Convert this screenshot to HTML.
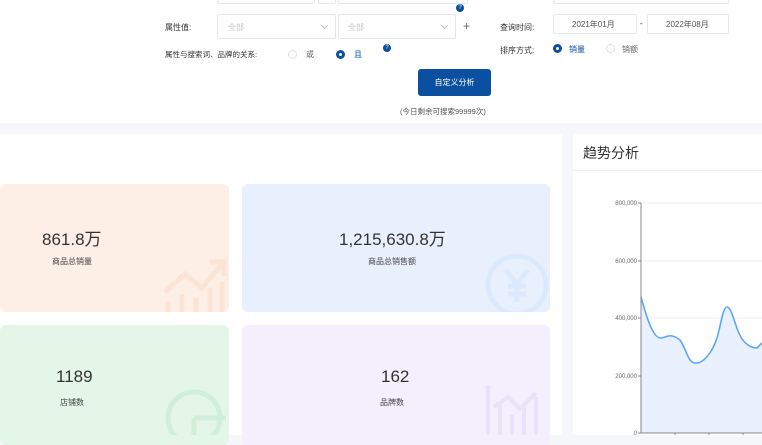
<!DOCTYPE html>
<html><head><meta charset="utf-8"><style>
*{margin:0;padding:0;box-sizing:border-box}
body{width:762px;height:435px;overflow:hidden;background:#f5f7fa;font-family:"Liberation Sans","Noto Sans CJK SC",sans-serif;position:relative;color:#333}
.a{position:absolute}
.box{position:absolute;border:1px solid #e4e7ed;background:#fff;border-radius:2px}
.t{position:absolute;font-size:8px;color:#333;white-space:nowrap}
.ph{color:#c0c4cc}
.rad{position:absolute;width:9px;height:9px;border-radius:50%;border:1px solid #dcdfe6;background:#fff}
.rad.on{border:3px solid #0a4fa0}
.q{position:absolute;width:8px;height:8px;border-radius:50%;background:#0a4fa0;color:#fff;font-size:6px;text-align:center;line-height:8px}
.chev{position:absolute;width:5px;height:5px;border-right:1px solid #c0c4cc;border-bottom:1px solid #c0c4cc;transform:rotate(45deg)}
.card{position:absolute;border-radius:6px;text-align:center}
.num{position:absolute;font-size:17px;color:#333;white-space:nowrap}
.lbl{position:absolute;font-size:8px;color:#444;white-space:nowrap}
</style></head><body>
<div class="a" style="left:0;top:0;width:762px;height:123px;background:#fff"></div>
<div class="box" style="left:217px;top:-10px;width:98px;height:14px"></div>
<div class="box" style="left:318px;top:-10px;width:18px;height:14px"></div>
<div class="box" style="left:338px;top:-10px;width:130px;height:14px"></div>
<div class="box" style="left:553px;top:-10px;width:176px;height:14px"></div>
<div class="q" style="left:456px;top:4px">?</div>
<div class="t" style="left:165px;top:22px">属性值:</div>
<div class="box" style="left:217px;top:14px;width:119px;height:25px"></div>
<div class="t ph" style="left:228px;top:22px">全部</div><div class="chev" style="left:322px;top:23px"></div>
<div class="box" style="left:338px;top:14px;width:118px;height:25px"></div>
<div class="t ph" style="left:348px;top:22px">全部</div><div class="chev" style="left:442px;top:23px"></div>
<div class="t" style="left:463px;top:19px;font-size:12px;color:#666">+</div>
<div class="t" style="left:500px;top:22px">查询时间:</div>
<div class="box" style="left:553px;top:14px;width:84px;height:20px"></div>
<div class="t" style="left:572px;top:19px;color:#555">2021年01月</div>
<div class="t" style="left:640px;top:19px">-</div>
<div class="box" style="left:647px;top:14px;width:82px;height:20px"></div>
<div class="t" style="left:666px;top:19px;color:#555">2022年08月</div>
<div class="t" style="left:165px;top:49px;font-size:7.5px">属性与搜索词、品牌的关系:</div>
<div class="rad" style="left:288px;top:50px"></div><div class="t" style="left:306px;top:49px;color:#666">或</div>
<div class="rad on" style="left:336px;top:50px"></div><div class="t" style="left:354px;top:49px;color:#0a4fa0">且</div>
<div class="q" style="left:383px;top:44px">?</div>
<div class="t" style="left:500px;top:45px">排序方式:</div>
<div class="rad on" style="left:553px;top:44px"></div><div class="t" style="left:569px;top:44px;color:#0a4fa0">销量</div>
<div class="rad" style="left:606px;top:44px"></div><div class="t" style="left:622px;top:44px;color:#666">销额</div>
<div class="a" style="left:418px;top:69px;width:73px;height:27px;background:#0a4fa0;border-radius:3px;color:#fff;font-size:8px;text-align:center;line-height:27px">自定义分析</div>
<div class="t" style="left:400px;top:106px;color:#555;font-size:7.5px">(今日剩余可搜索99999次)</div>

<div class="a" style="left:0;top:134px;width:562px;height:301px;background:#fff"></div>
<div class="card" style="left:0;top:184px;width:229px;height:128px;background:#fdeee6"></div>
<svg class="a" style="left:160px;top:252px" width="70" height="60"><g fill="none" stroke="#fbe3d6" stroke-width="5"><path d="M5 40 L25 22 L42 36 L62 12"/><path d="M50 10 H64 V24"/><path d="M8 50 V60 M22 42 V60 M36 46 V60 M50 36 V60 M62 30 V60"/></g></svg>
<div class="num" style="left:42px;top:225px">861.8万</div>
<div class="lbl" style="left:52px;top:256px">商品总销量</div>
<div class="card" style="left:242px;top:184px;width:308px;height:128px;background:#e8f0fd"></div>
<svg class="a" style="left:484px;top:252px" width="66" height="60"><circle cx="33" cy="33" r="29" fill="none" stroke="#dce8fb" stroke-width="5"/><path d="M22 18 L33 32 L44 18 M33 32 V50 M24 34 H42 M24 42 H42" fill="none" stroke="#dce8fb" stroke-width="5"/></svg>
<div class="num" style="left:339px;top:225px">1,215,630.8万</div>
<div class="lbl" style="left:368px;top:256px">商品总销售额</div>
<div class="card" style="left:0;top:325px;width:229px;height:120px;background:#e3f6e8"></div>
<svg class="a" style="left:164px;top:388px" width="66" height="47"><circle cx="30" cy="30" r="26" fill="none" stroke="#d0efd9" stroke-width="5"/><path d="M30 30 H62 M30 30 V47" stroke="#d0efd9" stroke-width="5"/></svg>
<div class="num" style="left:56px;top:367px">1189</div>
<div class="lbl" style="left:60px;top:397px">店铺数</div>
<div class="card" style="left:242px;top:325px;width:308px;height:120px;background:#f3effd"></div>
<svg class="a" style="left:484px;top:385px" width="60" height="50"><g fill="none" stroke="#e9e2f9" stroke-width="4"><path d="M4 0 V50 M16 20 V50 M28 30 V50 M40 22 V50 M52 12 V50"/><path d="M10 22 L24 12 L36 24 L52 8"/></g></svg>
<div class="num" style="left:381px;top:367px">162</div>
<div class="lbl" style="left:380px;top:397px">品牌数</div>

<div class="a" style="left:573px;top:134px;width:189px;height:301px;background:#fff"></div>
<div class="a" style="left:573px;top:170px;width:189px;height:1px;background:#eef0f3"></div>
<div class="t" style="left:583px;top:143px;font-size:14px;color:#333">趋势分析</div>
<svg class="a" style="left:573px;top:134px" width="189" height="301">
<g font-size="6" fill="#666" text-anchor="end" font-family="Liberation Sans">
<text x="64" y="71">800,000</text><text x="64" y="129">600,000</text><text x="64" y="186">400,000</text><text x="64" y="244">200,000</text><text x="64" y="301">0</text></g>
<g stroke="#eee" stroke-width="1"><path d="M68 69 H189 M68 127 H189 M68 184 H189 M68 242 H189"/></g>
<path d="M68 163 C74 185 80 203 87 204 C93 204 97 198 107 206 C113 214 115 229 122 229 C130 230 139 219 144 204 C148 190 150 173 154 173 C158 173 161 187 165 197 C170 210 178 214 184 214 L189 209 L189 299 L68 299 Z" fill="#e8f1fd"/>
<path d="M68 163 C74 185 80 203 87 204 C93 204 97 198 107 206 C113 214 115 229 122 229 C130 230 139 219 144 204 C148 190 150 173 154 173 C158 173 161 187 165 197 C170 210 178 214 184 214 L189 209" fill="none" stroke="#5ba7f7" stroke-width="1.6"/>
<path d="M68 69 V299 H189" fill="none" stroke="#888" stroke-width="1"/>
<g stroke="#888"><path d="M65 69 H68 M65 127 H68 M65 184 H68 M65 242 H68 M65 299 H68 M102 299 V302 M136 299 V302 M170 299 V302"/></g>
</svg>
</body></html>
